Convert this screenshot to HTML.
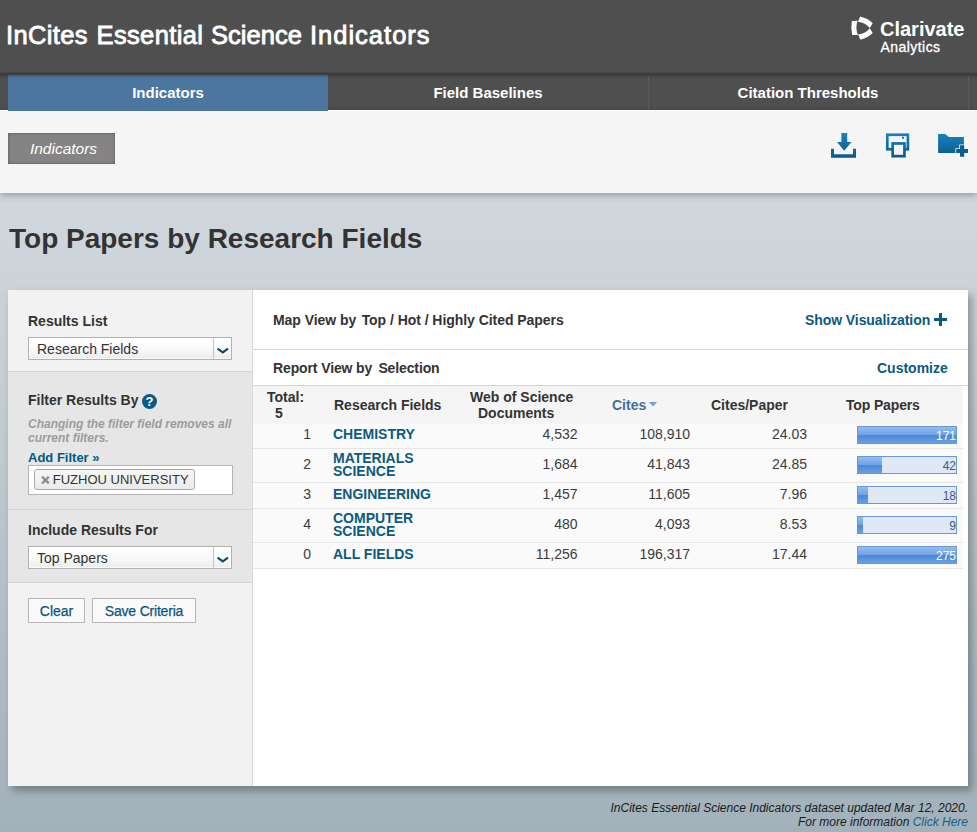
<!DOCTYPE html>
<html lang="en">
<head>
<meta charset="utf-8">
<title>InCites Essential Science Indicators</title>
<style>
*{box-sizing:border-box;margin:0;padding:0}
html,body{width:977px;height:832px;overflow:hidden}
body{font-family:"Liberation Sans",Arial,sans-serif;font-size:14px;color:#333;position:relative;
 background:linear-gradient(to bottom,#d1d8dc 0px,#d1d8dc 193px,#cbd3d9 290px,#a2b1ba 832px);}
a{color:#005a84;text-decoration:none}
.abs{position:absolute}
#hdr{left:0;top:0;width:977px;height:76px;background:#4f4f4f}
#hdrline{left:0;top:72px;width:977px;height:7px;background:linear-gradient(rgba(0,0,0,.06) 0,rgba(0,0,0,.23) 1.5px,rgba(0,0,0,.23) 3px,rgba(0,0,0,.1) 4.5px,rgba(0,0,0,0) 7px)}
#title{left:6px;top:20px;width:440px;height:30px;font-size:25.5px;color:#fff;font-weight:normal;white-space:nowrap;-webkit-text-stroke:0.85px #fff;line-height:30px}
#title span{position:absolute;top:0}
#tabs{left:0;top:75px;width:977px;height:35px;background:#4f4f4f}
.tab{position:absolute;top:75px;height:35px;width:320px;color:#fff;font-weight:bold;font-size:15px;text-align:center;line-height:35px}
#tab1{left:8px;background:#4a76a0;height:36px}
#tab2{left:328px}
#tab3{left:648px}
.tsep{position:absolute;top:77px;width:1px;height:33px;background:#5c5c5c}
#sub{left:0;top:110px;border-top:1px solid #fff;width:977px;height:83px;background:#f5f5f5;box-shadow:0 2px 7px rgba(0,0,0,.3)}
#crumb{left:8px;top:133px;width:107px;height:31px;background:#858384;box-shadow:inset 0 0 3px rgba(0,0,0,.4);color:#fff;font-style:italic;font-size:15.5px;line-height:31px;text-align:center;padding-left:4px}
#h1{left:9px;top:223px;font-size:28px;font-weight:bold;color:#333;white-space:nowrap}
#panel{left:8px;top:290px;width:960px;height:496px;background:#fff;box-shadow:4px 5px 8px rgba(0,0,0,.3)}
#side{left:8px;top:290px;width:245px;height:496px;background:#f2f2f2;border-right:1px solid #d9d9d9}
#sidemid{left:8px;top:371px;width:244px;height:212px;background:#e6e6e6;border-top:1px solid #d4d4d4;border-bottom:1px solid #d4d4d4}
#sidesep{left:8px;top:509px;width:244px;height:1px;background:#d4d4d4}
.lbl{position:absolute;left:28px;font-weight:bold;font-size:14px;color:#333;white-space:nowrap}
.sel{position:absolute;left:28px;width:204px;height:23px;background:linear-gradient(#fff 0%,#fbfbfb 45%,#ececec 100%);border:1px solid #b0b0b0;font-size:14px;line-height:23px;padding-left:8px;color:#333;box-shadow:inset 0 0 0 1px rgba(255,255,255,.7)}
.sel i{position:absolute;right:0;top:0;width:18px;height:21px;border-left:1px solid #c4c4c4}
.btn{position:absolute;top:598px;height:25px;background:#fafafa;border:1px solid #b5b5b5;color:#0a5580;font-size:14px;line-height:25px;text-align:center;-webkit-text-stroke:0.25px #0a5580}
.hd{position:absolute;font-weight:bold;font-size:14px;color:#333;white-space:nowrap}
.row{position:absolute;left:253px;width:710px;border-bottom:1px solid #e6e6e6;background:#fafafa}
.c{position:absolute;font-size:14px;color:#3c3c3c;white-space:nowrap}
.r{text-align:right}
.f{position:absolute;left:333px;font-weight:bold;color:#0b5a80;font-size:14px;line-height:13px}
.bar{position:absolute;left:857px;width:100px;height:18px;background:#dfe8f5;border:1px solid #6a97d6;overflow:hidden}
.bar b{position:absolute;left:0;top:0;height:100%;background:linear-gradient(to bottom,#96bbee 0%,#6fa3e6 48%,#4c86d8 52%,#6b9fe2 100%)}
.bar span{position:absolute;right:0px;top:2px;font-size:12px;line-height:14px;color:#3d5a85;font-weight:normal}

#clar{left:880px;top:17px;font-size:20px;font-weight:bold;color:#fff;white-space:nowrap;line-height:24px}
#anal{left:880.5px;top:37.5px;font-size:14px;letter-spacing:.45px;color:#fff;white-space:nowrap;line-height:18px;-webkit-text-stroke:0.3px #fff}
#foot{right:9px;top:801px;font-size:12px;font-style:italic;color:#1a1a1a;text-align:right;line-height:14px;white-space:nowrap}
#foot a{color:#1c6088}

#help{left:142px;top:394px;width:15px;height:15px;border-radius:50%;background:#0b5a85;color:#fff;font-weight:bold;font-size:13px;line-height:15px;text-align:center}
#note{left:28px;top:418px;font-size:12px;font-weight:bold;font-style:italic;color:#9c9c9c;line-height:13.6px;white-space:nowrap}
#addf{left:28px;top:450px;font-size:13px;font-weight:bold;color:#005a84;white-space:nowrap;line-height:16px}
#fbox{left:28px;top:465px;width:205px;height:30px;background:#fff;border:1px solid #b5b5b5}
#tag{left:34px;top:469px;width:161px;height:21px;border:1px solid #aaa;border-radius:3px;background:linear-gradient(#f6f6f6,#ebebeb);font-size:13px;line-height:19px;color:#333;white-space:nowrap;padding-left:6px}
#tag .x{color:#8a8a8a;-webkit-text-stroke:0.5px #8a8a8a;font-weight:bold;font-size:15px;margin-right:3px;line-height:15px;position:relative;top:0.5px}
</style>
</head>
<body>
<div id="hdr" class="abs"></div>
<div id="title" class="abs"><span style="left:0;letter-spacing:.37px">InCites</span> <span style="left:90.5px;letter-spacing:.37px">Essential</span> <span style="left:205px;letter-spacing:.02px">Science</span> <span style="left:304px;letter-spacing:1px">Indicators</span></div>
<svg class="abs" style="left:846px;top:12px" width="32" height="32" viewBox="0 0 32 32"><g fill="#fff">
<path d="M5.8 9.0 L11.5 8.7 Q9.1 16 11.9 23.1 L6.2 22.9 Q4.7 16 5.800 9.000Z"/>
<path d="M14.2 4.6 Q22.15 6.5 26.7 11.2 L23.8 16.1 Q19.75 10.8 11.9 9.800Z"/>
<path d="M14.4 27.7 Q22.15 25.8 26.7 21.1 L23.8 16.3 Q19.75 21.5 12.1 22.600Z"/>
</g></svg>
<div id="clar" class="abs">Clarivate</div>
<div id="anal" class="abs">Analytics</div>
<div id="tabs" class="abs"></div>
<div id="sub" class="abs"></div>
<div id="tab1" class="tab">Indicators</div>
<div id="tab2" class="tab">Field Baselines</div>
<div id="tab3" class="tab">Citation Thresholds</div>
<div id="hdrline" class="abs"></div>
<div class="tsep" style="left:648px"></div><div class="tsep" style="left:654px;opacity:.35"></div><div class="tsep" style="left:968px"></div><div class="tsep" style="left:974px;opacity:.35"></div>
<div id="crumb" class="abs">Indicators</div>
<svg class="abs" style="left:826px;top:126px" width="150" height="40" viewBox="826 126 150 40">
<defs><linearGradient id="ig" x1="0" y1="133" x2="0" y2="158" gradientUnits="userSpaceOnUse"><stop offset="0" stop-color="#1883bd"/><stop offset="1" stop-color="#085a88"/></linearGradient></defs>
<g fill="url(#ig)">
<path d="M841.4 133h5.800v9h4.300L844.200 150.800 837 142h4.400z"/>
<path d="M831 148.700h3v5.500h19v-5.500h3v9.100H831z"/>
<path d="M938.100 134h7l3.700 3h15.100v15.900h-25.800z"/>
</g>
<g fill="none" stroke="url(#ig)" stroke-width="2.700">
<rect x="887.300" y="134.750" width="20.600" height="14.500"/>
<rect x="892.650" y="143.450" width="11.800" height="12.700" fill="#f5f5f5"/>
</g>
<rect x="902" y="136.700" width="2" height="2" fill="#1479b0"/>
<path d="M960 145.200h4.200v3.800h3.800v3.900h-3.800v3.800H960v-3.800h-3.800V149h3.800z" fill="#085f8f" stroke="#f5f5f5" stroke-width="1.600" paint-order="stroke"/>
</svg>
<div id="h1" class="abs">Top Papers by Research Fields</div>
<div id="panel" class="abs"></div>
<div id="side" class="abs"></div>
<div id="sidemid" class="abs"></div>
<div id="sidesep" class="abs"></div>
<div class="lbl" style="top:313px">Results List</div>
<div class="sel" style="top:337px">Research Fields<i><svg width="18" height="21" viewBox="0 0 18 21"><path d="M3.600 10.600 L8.800 14.400 L14 10.600" fill="none" stroke="#0d4d70" stroke-width="2.200"/></svg></i></div>
<div class="lbl" style="top:391.5px">Filter Results By</div>
<div id="help" class="abs">?</div>
<div id="note" class="abs">Changing the filter field removes all<br>current filters.</div>
<div id="addf" class="abs">Add Filter &raquo;</div>
<div id="fbox" class="abs"></div>
<div id="tag" class="abs"><span class="x">&times;</span>FUZHOU UNIVERSITY</div>
<div class="lbl" style="top:522px">Include Results For</div>
<div class="sel" style="top:546px">Top Papers<i><svg width="18" height="21" viewBox="0 0 18 21"><path d="M3.600 10.600 L8.800 14.400 L14 10.600" fill="none" stroke="#0d4d70" stroke-width="2.200"/></svg></i></div>
<div class="btn" style="left:28px;width:57px">Clear</div>
<div class="btn" style="left:92px;width:104px;letter-spacing:-.2px">Save Criteria</div>

<!--MAINSTART-->
<div class="hd" style="left:273px;top:312px;letter-spacing:-.05px">Map View by<span style="margin-left:1.6px"> </span>Top / Hot / Highly Cited Papers</div>
<div class="hd" style="left:805px;top:312px;color:#0b5a80;letter-spacing:-.08px">Show Visualization</div>
<svg class="abs" style="left:934px;top:313px" width="13" height="13" viewBox="0 0 13 13"><path d="M5 0h3v5h5v3H8v5H5V8H0V5h5z" fill="#0b5a80"/></svg>
<div class="abs" style="left:253px;top:349px;width:715px;height:1px;background:#d4d4d4"></div>
<div class="hd" style="left:273px;top:360px;letter-spacing:-.12px">Report View by<span style="margin-left:2.4px"> </span>Selection</div>
<div class="hd" style="left:877px;top:360px;color:#0b5a80">Customize</div>
<div class="abs" style="left:253px;top:385px;width:715px;height:1px;background:#d4d4d4"></div>
<div class="abs" style="left:253px;top:386px;width:710px;height:38px;background:#f5f5f5"></div>
<div class="hd" style="left:267px;top:389px;line-height:16px">Total:</div>
<div class="hd" style="left:275px;top:405px;line-height:16px">5</div>
<div class="hd" style="left:334px;top:397px">Research Fields</div>
<div class="hd" style="left:470px;top:389px;line-height:16px">Web of Science</div>
<div class="hd" style="left:478px;top:405px;line-height:16px">Documents</div>
<div class="hd" style="left:612px;top:397px;color:#43709b">Cites</div>
<svg class="abs" style="left:649px;top:402px" width="8" height="5" viewBox="0 0 8 5"><path d="M0 0h8L4 4.5z" fill="#6fa0d8"/></svg>
<div class="hd" style="left:711px;top:397px">Cites/Paper</div>
<div class="hd" style="left:846px;top:397px;letter-spacing:-.15px">Top Papers</div>
<div class="row" style="top:424px;height:25px"></div>
<div class="c r" style="left:280px;width:31px;top:426.0px">1</div><div class="f" style="top:426.0px;line-height:16px">CHEMISTRY</div><div class="c r" style="left:500px;width:77.5px;top:426.0px">4,532</div><div class="c r" style="left:600px;width:90px;top:426.0px">108,910</div><div class="c r" style="left:720px;width:87px;top:426.0px">24.03</div><div class="bar" style="top:426px"><b style="width:98px"></b><span style="color:#fff">171</span></div>
<div class="row" style="top:449px;height:34px"></div>
<div class="c r" style="left:280px;width:31px;top:455.5px">2</div><div class="f" style="top:451.9px;line-height:13px">MATERIALS<br>SCIENCE</div><div class="c r" style="left:500px;width:77.5px;top:455.5px">1,684</div><div class="c r" style="left:600px;width:90px;top:455.5px">41,843</div><div class="c r" style="left:720px;width:87px;top:455.5px">24.85</div><div class="bar" style="top:456px"><b style="width:24px"></b><span>42</span></div>
<div class="row" style="top:483px;height:26px"></div>
<div class="c r" style="left:280px;width:31px;top:485.5px">3</div><div class="f" style="top:485.5px;line-height:16px">ENGINEERING</div><div class="c r" style="left:500px;width:77.5px;top:485.5px">1,457</div><div class="c r" style="left:600px;width:90px;top:485.5px">11,605</div><div class="c r" style="left:720px;width:87px;top:485.5px">7.96</div><div class="bar" style="top:486px"><b style="width:10px"></b><span>18</span></div>
<div class="row" style="top:509px;height:34px"></div>
<div class="c r" style="left:280px;width:31px;top:515.5px">4</div><div class="f" style="top:511.9px;line-height:13px">COMPUTER<br>SCIENCE</div><div class="c r" style="left:500px;width:77.5px;top:515.5px">480</div><div class="c r" style="left:600px;width:90px;top:515.5px">4,093</div><div class="c r" style="left:720px;width:87px;top:515.5px">8.53</div><div class="bar" style="top:516px"><b style="width:5px"></b><span>9</span></div>
<div class="row" style="top:543px;height:26px"></div>
<div class="c r" style="left:280px;width:31px;top:545.5px">0</div><div class="f" style="top:545.5px;line-height:16px">ALL FIELDS</div><div class="c r" style="left:500px;width:77.5px;top:545.5px">11,256</div><div class="c r" style="left:600px;width:90px;top:545.5px">196,317</div><div class="c r" style="left:720px;width:87px;top:545.5px">17.44</div><div class="bar" style="top:546px"><b style="width:98px"></b><span style="color:#fff">275</span></div>
<!--MAINEND-->
<div id="foot" class="abs">InCites Essential Science Indicators dataset updated Mar 12, 2020.<br>For more information <a>Click Here</a></div>
</body>
</html>
